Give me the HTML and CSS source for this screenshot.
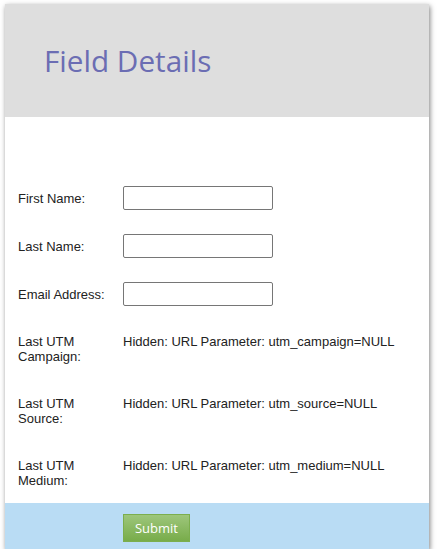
FILE: index.html
```html
<!DOCTYPE html>
<html>
<head>
<meta charset="utf-8">
<link rel="stylesheet" href="styles.css">
</head>
<body>
<div class="card">
  <div class="header">
    <h1 class="title">Field Details</h1>
  </div>
  <div class="form">
    <div class="row row-input">
      <label class="label">First Name:</label>
      <input class="field" type="text">
    </div>
    <div class="row row-input">
      <label class="label">Last Name:</label>
      <input class="field" type="text">
    </div>
    <div class="row row-input">
      <label class="label">Email Address:</label>
      <input class="field" type="text">
    </div>
    <div class="row row-text">
      <div class="label">Last UTM<br>Campaign:</div>
      <div class="value">Hidden: URL Parameter: utm_campaign=NULL</div>
    </div>
    <div class="row row-text">
      <div class="label">Last UTM<br>Source:</div>
      <div class="value">Hidden: URL Parameter: utm_source=NULL</div>
    </div>
    <div class="row row-text">
      <div class="label">Last UTM<br>Medium:</div>
      <div class="value">Hidden: URL Parameter: utm_medium=NULL</div>
    </div>
  </div>
  <div class="footer">
    <button class="submit" type="button">Submit</button>
  </div>
</div>
</body>
</html>
```
FILE: styles.css
```css
html, body {
  margin: 0;
  padding: 0;
  background: #ffffff;
}
body {
  padding: 4px 9px 0 5px;
}
.card {
  width: 424px;
  background: #ffffff;
  box-shadow: 1px 2px 5px rgba(0, 0, 0, 0.5);
}
.header {
  height: 113px;
  background: #dedede;
  display: flex;
  align-items: center;
  padding-left: 39px;
}
.title {
  margin: 0;
  font-family: "Open Sans", sans-serif;
  font-weight: 400;
  font-size: 29.7px;
  color: #6b6db3;
}
.form {
  padding: 69px 0 0 13px;
  font-family: "Liberation Sans", Arial, sans-serif;
  font-size: 13px;
  color: #222222;
}
.row {
  display: flex;
}
.label {
  width: 105px;
  flex: none;
}
.row-input {
  height: 24px;
  align-items: center;
  margin-bottom: 24px;
}
.row-text {
  padding-top: 4px;
  line-height: 15px;
  min-height: 30px;
  margin-bottom: 28px;
}
.row-text:last-child {
  margin-bottom: 15px;
}
.field {
  box-sizing: border-box;
  width: 150px;
  height: 24px;
  margin: 0;
  border: 1px solid #767676;
  border-radius: 2px;
  background: #ffffff;
  padding: 0 4px;
}
.footer {
  height: 46px;
  background: #b9dcf4;
  padding: 11px 0 0 118px;
  box-sizing: border-box;
}
.submit {
  box-sizing: border-box;
  width: 67px;
  height: 28px;
  margin: 0;
  padding: 0;
  border: 1px solid #7cae4d;
  border-radius: 0;
  background: linear-gradient(#9dc67b, #78ac4a);
  color: #ffffff;
  font-family: "Open Sans", sans-serif;
  font-size: 13px;
}
```
